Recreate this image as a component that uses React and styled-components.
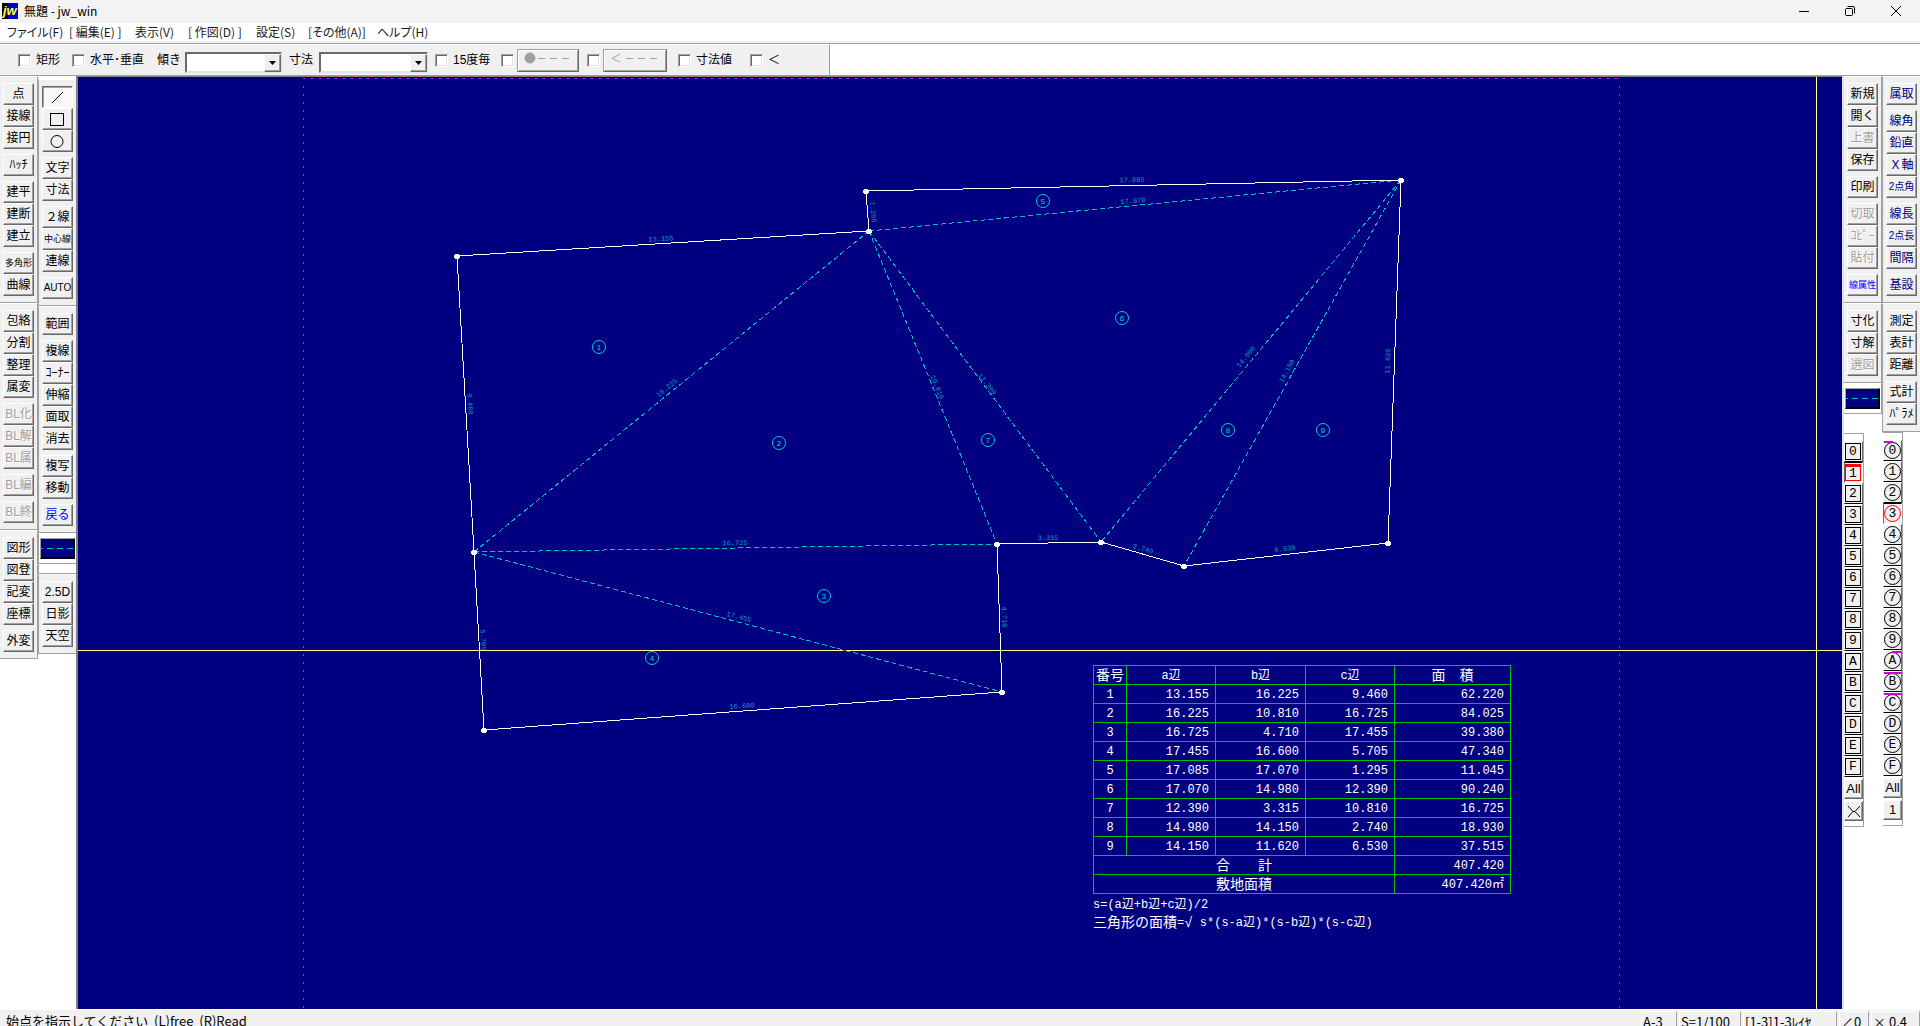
import React, {useState} from 'react';
import styled, {createGlobalStyle, css} from 'styled-components';

const GlobalStyle = createGlobalStyle`
* {
    box-sizing: border-box;
}
body {
    margin: 0;
    background: #fff;
    color: #000;
    font: 12px/16px 'Liberation Sans', 'Noto Sans CJK JP', sans-serif;
}
button, select, input {
    margin: 0;
    padding: 0;
    font: inherit;
    color: inherit;
}
`

const Window = styled.div`
display: grid;
grid-template-rows: 23px 20px 33px 1fr 17px;
height: 100vh;
overflow: hidden;
white-space: nowrap;
`

const TitleBar = styled.header`
display: flex;
align-items: flex-start;
padding: 1px 1px 0 2px;
gap: 6px;
background: #f3f3f3;
font-family: 'Noto Sans CJK JP', sans-serif;
line-height: 20px;

& > svg {
    margin-top: 2px;
}
`
const WindowButtons = styled.div`
display: flex;
margin-left: auto;
`
const WindowButton = styled.button`
display: flex;
align-items: center;
justify-content: center;
width: 46px;
height: 19px;
border: 0;
background: none;
`

const MenuBar = styled.nav`
display: flex;
padding-left: 7px;
border-bottom: 2px solid #f0f0f0;
background: #fff;
font-family: 'Noto Sans CJK JP', sans-serif;
font-size: 12px;
line-height: 18px;
font-feature-settings: 'palt';
`
const MenuLink = styled.a`
width: ${({$width}) => $width}px;
color: #1a1a1a;
text-decoration: none;
`

const ToolBar = styled.div`
border-top: 1px solid #a0a0a0;
border-bottom: 1px solid #a0a0a0;
background: #fff;
`
const ToolPanel = styled.div`
display: flex;
align-items: center;
width: 830px;
height: 31px;
padding-left: 18px;
border-top: 1px solid #fff;
border-right: 1px solid #a0a0a0;
background: #f0f0f0;
`
const Slot = styled.div`
display: flex;
align-items: center;
flex: none;
width: ${({$width}) => $width}px;
`
const CheckLabel = styled.label`
display: flex;
align-items: center;
gap: 5px;
`
const Check = styled.input.attrs({type: 'checkbox'})`
appearance: none;
flex: none;
width: 13px;
height: 13px;
border: 1px solid;
border-color: #a0a0a0 #fff #fff #a0a0a0;
background: #fff;
box-shadow: inset 1px 1px #696969, inset -1px -1px #e3e3e3;

&:checked {
    background: #444;
}
`
const Combo = styled.div`
position: relative;
width: ${({$width}) => $width}px;
height: 21px;
margin-top: 4px;
`
const ComboSelect = styled.select`
appearance: none;
width: 100%;
height: 100%;
padding-left: 4px;
border: 2px solid;
border-color: #696969 #e3e3e3 #e3e3e3 #696969;
border-radius: 0;
background: #fff;
`
const ComboArrow = styled.span`
position: absolute;
top: 2px;
right: 1px;
bottom: 1px;
display: flex;
align-items: center;
justify-content: center;
width: 17px;
border: 1px solid;
border-color: #fff #696969 #696969 #fff;
background: #f0f0f0;
box-shadow: inset -1px -1px #a0a0a0;
pointer-events: none;
`
const StyleButton = styled.button`
width: ${({$width}) => $width}px;
height: 23px;
border: 1px solid;
border-color: #a0a0a0 #696969 #696969 #a0a0a0;
background: #f0f0f0;
box-shadow: inset 1px 1px #fff, inset -1px -1px #a0a0a0;
`

const Workspace = styled.main`
display: grid;
grid-template-columns: auto 1fr auto;
min-height: 0;
`
const Dock = styled.div`
display: flex;
align-items: flex-start;
background: #fff;
`
const Column = styled.div`
display: flex;
flex-direction: column;
width: 38px;
padding-top: ${({$low}) => $low ? 3 : 0}px;
`
const edges = {
    left: css`border-left: 1px solid #a0a0a0;`,
    right: css`border-right: 1px solid #a0a0a0;`,
}
const Panel = styled.div`
display: flex;
flex-direction: column;
gap: 5px;
padding: ${({$flat}) => $flat ? '4px 1px' : '6px 3px'};
border-top: 1px solid #fff;
border-bottom: 1px solid #a0a0a0;
background: ${({$white}) => $white ? '#fff' : '#f0f0f0'};
${({$edge}) => edges[$edge]}
`
const Group = styled.div`
display: flex;
flex-direction: column;
`
const tones = {
    black: '#000',
    blue: '#0000ff',
    navy: '#000080',
    gray: '#a0a0a0',
}
const ToolButton = styled.button`
display: flex;
align-items: center;
justify-content: center;
width: 31px;
height: 22px;
border: 1px solid;
border-color: #fff #696969 #696969 #fff;
background: #f0f0f0;
box-shadow: inset -1px -1px #a0a0a0;
color: ${({$tone}) => tones[$tone]};
font-size: ${({$size}) => $size}px;
line-height: 16px;
text-shadow: ${({$tone}) => $tone === 'gray' ? '1px 1px #fff' : 'none'};
${({$pressed}) => $pressed && css`
    border-color: #696969 #fff #fff #696969;
    background: #f8f8f8;
    box-shadow: inset 1px 1px #a0a0a0;
`}
`
const LineButton = styled.button`
display: block;
width: 35px;
height: 21px;
border: 1px solid;
border-color: #a0a0a0 #000 #000 #a0a0a0;
background: #000080;
box-shadow: inset -1px -1px #000;

& > svg {
    display: block;
}
`

const LayerPanel = styled.div`
display: flex;
flex-direction: column;
width: 20px;
padding: 7px 0 5px;
border: 1px solid #a0a0a0;
border-left: 0;
margin-top: ${({$gap}) => $gap}px;
margin-left: ${({$inset}) => $inset}px;
background: #fff;
`
const LayerButton = styled.button`
position: relative;
display: flex;
align-items: center;
width: 19px;
height: 21px;
border: 1px solid;
border-color: ${({$active}) => $active ? '#000 #fff #fff #696969' : '#fff #696969 #000 #fff'};
background: #f0f0f0;
font-family: 'Liberation Mono', monospace;
font-size: 13px;
`
const LayerMark = styled.span`
display: flex;
align-items: center;
justify-content: center;
width: ${({$round}) => $round ? 17 : 16}px;
height: 17px;
border: 1px solid ${({$active}) => $active ? '#ff0000' : '#000'};
border-top-width: ${({$active, $round}) => $active && !$round ? 3 : 1}px;
border-radius: ${({$round}) => $round ? '50%' : 0};
`
const bars = {
    left: css`left: 0; width: 9px;`,
    right: css`right: 0; width: 9px;`,
    full: css`left: 0; width: 17px;`,
}
const LayerBar = styled.span`
position: absolute;
top: 0;
height: 2px;
background: #d000d0;
${({$bar}) => bars[$bar]}
`
const LayerAction = styled(ToolButton)`
width: 19px;
height: 20px;
margin-top: 2px;
font-size: 13px;
`

const Canvas = styled.section`
position: relative;
overflow: hidden;
border: solid #808080;
border-width: 1px 0 0 2px;
background: #000080;
box-shadow: 2px 0 #e3e3e3;
margin-right: 2px;
`
const Drawing = styled.svg`
position: absolute;
inset: 0;
width: 100%;
height: 100%;
shape-rendering: crispEdges;
`
const Outline = styled.polygon`
fill: none;
stroke: #fff;
`
const Diagonal = styled.line`
stroke: #00c0c0;
stroke-dasharray: 5 3;
`
const PaperEdge = styled.line`
stroke: #ff00ff;
stroke-dasharray: 2 6;
`
const Cursor = styled.line`
stroke: #ffff80;
`
const EdgeLabel = styled.text`
fill: #00a0b8;
font: 7px 'Liberation Mono', monospace;
text-anchor: middle;
dominant-baseline: central;
`
const AreaMark = styled.g`
fill: none;
stroke: #00d0d0;
shape-rendering: geometricPrecision;

& > text {
    fill: #00d0d0;
    stroke: none;
    font: 8px 'Liberation Mono', monospace;
    text-anchor: middle;
}
`

const Report = styled.div`
position: absolute;
left: 1015px;
top: 588px;
color: #fff;
font: 12px/18px 'Liberation Mono', 'Noto Sans CJK JP', monospace;
`
const AreaTable = styled.table`
width: 418px;
height: 227px;
table-layout: fixed;
border-collapse: collapse;
margin-bottom: 2px;

& th, & td {
    padding: 2px 0 0;
    border: 1px solid #00c000;
    font-weight: inherit;
    line-height: 16px;
    text-align: center;
}
`
const NumberCell = styled.td`
&& {
    padding-right: 6px;
    text-align: right;
}
`
const Wide = styled.span`
font-size: 14px;
vertical-align: top;
`
const Formula = styled.p`
margin: 0;
white-space: pre;
`

const StatusBar = styled.footer`
display: flex;
justify-content: space-between;
overflow: hidden;
border-top: 1px solid #fff;
background: #f0f0f0;
font-family: 'Noto Sans CJK JP', sans-serif;
font-size: 13px;
line-height: 20px;
`
const StatusText = styled.span`
padding: 1px 0 0 6px;
white-space: pre;
`
const StatusCells = styled.div`
display: flex;
gap: 2px;
padding-top: 1px;
`
const StatusCell = styled.span`
width: ${({$width}) => $width}px;
height: 24px;
padding-left: 1px;
border: 1px solid;
border-color: #fff #a0a0a0 #fff #fff;
`

const MENUS = [
    ['ファイル(F)', 62],
    ['[ 編集(E) ]', 66],
    ['表示(V)', 53],
    ['[ 作図(D) ]', 68],
    ['設定(S)', 52],
    ['[その他(A)]', 69],
    ['ヘルプ(H)', 60],
];

const SMALL = ['中心線', '多角形', '線属性'];
const MEDIUM = ['AUTO', '2点角', '2点長'];
const DISABLED = ['BL化', 'BL解', 'BL属', 'BL編', 'BL終', '上書', '切取', 'ｺﾋﾟｰ', '貼付', '選図'];
const BLUE = ['戻る', '線属性'];

const LEFT_OUTER = [
    [['点', '接線', '接円'], ['ﾊｯﾁ'], ['建平', '建断', '建立'], ['多角形', '曲線']],
    [['包絡', '分割', '整理', '属変'], ['BL化', 'BL解', 'BL属'], ['BL編'], ['BL終']],
    [['図形', '図登', '記変', '座標'], ['外変']],
];
const LEFT_INNER = [
    [['line', 'rect', 'circle'], ['文字', '寸法'], ['２線', '中心線', '連線'], ['AUTO']],
    [['範囲'], ['複線', 'ｺｰﾅｰ', '伸縮', '面取', '消去'], ['複写', '移動'], ['戻る']],
];
const RIGHT_INNER = [
    [['新規', '開く', '上書', '保存'], ['印刷'], ['切取', 'ｺﾋﾟｰ', '貼付'], ['線属性']],
    [['寸化', '寸解', '選図']],
];
const RIGHT_NAVY = [['属取'], ['線角', '鉛直', 'Ｘ軸', '2点角'], ['線長', '2点長', '間隔'], ['基設']];

const LAYERS = '0123456789ABCDEF'.split('');
const LAYER_BARS = {0: 'left', A: 'right', B: 'full', C: 'full'};

const P = {
    a: [379, 179], b: [791, 154], c: [788, 114], d: [1323, 103],
    e: [1310, 466], f: [1106, 489], g: [1023, 465], h: [919, 467],
    i: [924, 615], j: [406, 653], k: [396, 475],
};
const DIAGONALS = ['bk', 'bh', 'bg', 'bd', 'dg', 'df', 'kh', 'ki'];
const AREA_MARKS = [
    [521, 270], [701, 366], [746, 519], [574, 581], [965, 124],
    [1044, 241], [910, 363], [1150, 353], [1245, 353],
];
const EDGE_LABELS = [
    ['13.155', 583, 162, -4], ['16.225', 589, 311, -39], ['9.460', 392, 327, 86],
    ['1.295', 795, 135, 86], ['17.085', 1054, 103, -1], ['17.070', 1055, 124, -5],
    ['10.810', 859, 310, 68], ['12.390', 909, 307, 53], ['14.980', 1168, 280, -50],
    ['14.150', 1209, 294, -61], ['11.620', 1310, 284, -88], ['3.315', 970, 461, -1],
    ['2.740', 1065, 472, 16], ['6.530', 1207, 472, -7], ['16.725', 657, 466, -1],
    ['17.455', 661, 540, 15], ['4.710', 926, 540, 88], ['16.600', 664, 629, -4],
    ['5.705', 405, 563, 87],
];
const ROWS = [
    ['13.155', '16.225', '9.460', '62.220'],
    ['16.225', '10.810', '16.725', '84.025'],
    ['16.725', '4.710', '17.455', '39.380'],
    ['17.455', '16.600', '5.705', '47.340'],
    ['17.085', '17.070', '1.295', '11.045'],
    ['17.070', '14.980', '12.390', '90.240'],
    ['12.390', '3.315', '10.810', '16.725'],
    ['14.980', '14.150', '2.740', '18.930'],
    ['14.150', '11.620', '6.530', '37.515'],
];

const shapes = {
    line: <path d="M3 14L14 3" />,
    rect: <rect x="1.5" y="2.5" width="13" height="12" />,
    circle: <circle cx="8" cy="8.5" r="6" />,
};

const Tool = ({name, tone, pressed, onClick}) => {
    const color = tone || (DISABLED.includes(name) ? 'gray' : BLUE.includes(name) ? 'blue' : 'black');
    const size = SMALL.includes(name) ? 9 : MEDIUM.includes(name) ? 10 : 12;

    return (
        <ToolButton
            $tone={color}
            $size={size}
            $pressed={pressed}
            onClick={onClick}
            disabled={color === 'gray'}
            aria-label={name}
        >
            {shapes[name]
                ? <svg width="18" height="17" fill="none" stroke="#000">{shapes[name]}</svg>
                : name}
        </ToolButton>
    );
};

const ToolPanels = ({panels, edge, tone, active, onSelect}) => panels.map((groups, i) => (
    <Panel key={i} $edge={edge}>
        {groups.map(group => (
            <Group key={group[0]}>
                {group.map(name => (
                    <Tool
                        key={name}
                        name={name}
                        tone={tone}
                        pressed={active === name}
                        onClick={() => onSelect && onSelect(name)}
                    />
                ))}
            </Group>
        ))}
    </Panel>
));

const LineStyle = ({edge}) => (
    <Panel $flat $white $edge={edge}>
        <LineButton aria-label="線属性">
            <svg width="32" height="18">
                <path d="M0 8.5H32" stroke="#00c0c0" strokeDasharray="6 4" strokeDashoffset="4" />
            </svg>
        </LineButton>
    </Panel>
);

const Layers = ({round, initial, gap, inset, children}) => {
    const [active, setActive] = useState(initial);

    return (
        <LayerPanel $gap={gap} $inset={inset}>
            {LAYERS.map(layer => (
                <LayerButton key={layer} $active={active === layer} onClick={() => setActive(layer)}>
                    <LayerMark $round={round} $active={active === layer}>{layer}</LayerMark>
                    {round && LAYER_BARS[layer] && <LayerBar $bar={LAYER_BARS[layer]} />}
                </LayerButton>
            ))}
            <LayerAction $tone="black">All</LayerAction>
            {children}
        </LayerPanel>
    );
};

const Option = ({width, children, label}) => (
    <Slot $width={width}>
        <CheckLabel>
            <Check aria-label={label} />
            {children}
        </CheckLabel>
    </Slot>
);

const ComboBox = ({id, width}) => (
    <Combo $width={width}>
        <ComboSelect id={id}>
            <option></option>
        </ComboSelect>
        <ComboArrow>
            <svg width="7" height="4"><path d="M0 0H7L3.5 4Z" /></svg>
        </ComboArrow>
    </Combo>
);

const Plan = () => (
    <Drawing>
        <PaperEdge x1="225" y1="1.5" x2="1541" y2="1.5" />
        <PaperEdge x1="225.5" y1="9" x2="225.5" y2="100%" />
        <PaperEdge x1="1541.5" y1="9" x2="1541.5" y2="100%" />
        {DIAGONALS.map(([from, to]) => (
            <Diagonal key={from + to} x1={P[from][0]} y1={P[from][1]} x2={P[to][0]} y2={P[to][1]} />
        ))}
        <Cursor x1="0" y1="573.5" x2="100%" y2="573.5" />
        <Cursor x1="1738.5" y1="0" x2="1738.5" y2="100%" />
        <path d="M765 573.5H768" stroke="#ff0040" />
        <Outline points={Object.values(P).reverse().join(' ')} />
        {Object.values(P).map(([x, y]) => (
            <circle key={`${x}-${y}`} cx={x} cy={y + 0.5} r="3" fill="#fff" />
        ))}
        {EDGE_LABELS.map(([text, x, y, angle]) => (
            <EdgeLabel key={text} transform={`translate(${x} ${y}) rotate(${angle})`}>{text}</EdgeLabel>
        ))}
        {AREA_MARKS.map(([x, y], i) => (
            <AreaMark key={i}>
                <circle cx={x} cy={y} r="6.5" />
                <text x={x} y={y + 3}>{i + 1}</text>
            </AreaMark>
        ))}
    </Drawing>
);

const AreaReport = () => (
    <Report>
        <AreaTable>
            <colgroup>
                <col width="33" />
                <col width="89" />
                <col width="90" />
                <col width="89" />
                <col width="116" />
            </colgroup>
            <thead>
                <tr>
                    <th><Wide>番号</Wide></th>
                    <th>a辺</th>
                    <th>b辺</th>
                    <th>c辺</th>
                    <th><Wide>面　積</Wide></th>
                </tr>
            </thead>
            <tbody>
                {ROWS.map((row, i) => (
                    <tr key={i}>
                        <td>{i + 1}</td>
                        {row.map((value, j) => <NumberCell key={j}>{value}</NumberCell>)}
                    </tr>
                ))}
                <tr>
                    <th colSpan="4"><Wide>合　　計</Wide></th>
                    <NumberCell>407.420</NumberCell>
                </tr>
                <tr>
                    <th colSpan="4"><Wide>敷地面積</Wide></th>
                    <NumberCell>407.420㎡</NumberCell>
                </tr>
            </tbody>
        </AreaTable>
        <Formula>s=(a辺+b辺+c辺)/2</Formula>
        <Formula><Wide>三角形の面積</Wide>=<Wide>√</Wide> s*(s-a辺)*(s-b辺)*(s-c辺)</Formula>
    </Report>
);

const App = () => {

    const [tool, setTool] = useState('line');

    return (
        <Window>
            <GlobalStyle />
            <TitleBar>
                <svg width="16" height="16">
                    <rect width="16" height="16" fill="#000" />
                    <rect x="6" width="10" height="16" fill="#0000d0" />
                    <text x="1" y="12" fill="#ffff40" fontFamily="Liberation Sans" fontSize="13" fontWeight="bold" fontStyle="italic">jw</text>
                </svg>
                <span>無題 - jw_win</span>
                <WindowButtons>
                    <WindowButton aria-label="最小化">
                        <svg width="10" height="10"><path d="M0 5.5H10" stroke="#000" /></svg>
                    </WindowButton>
                    <WindowButton aria-label="元に戻す">
                        <svg width="10" height="10" fill="none" stroke="#000">
                            <rect x="0.5" y="2.5" width="7" height="7" rx="1" />
                            <path d="M2.5 0.5H8Q9.5 0.5 9.5 2V7.5" />
                        </svg>
                    </WindowButton>
                    <WindowButton aria-label="閉じる">
                        <svg width="10" height="10"><path d="M0 0L10 10M10 0L0 10" stroke="#000" /></svg>
                    </WindowButton>
                </WindowButtons>
            </TitleBar>
            <MenuBar>
                {MENUS.map(([title, width]) => (
                    <MenuLink key={title} href="#" $width={width}>{title}</MenuLink>
                ))}
            </MenuBar>
            <ToolBar>
                <ToolPanel>
                    <Option width={54}>矩形</Option>
                    <Option width={85}>水平･垂直</Option>
                    <Slot $width={28}><label htmlFor="angle">傾き</label></Slot>
                    <Slot $width={104}><ComboBox id="angle" width={97} /></Slot>
                    <Slot $width={30}><label htmlFor="size">寸法</label></Slot>
                    <Slot $width={116}><ComboBox id="size" width={109} /></Slot>
                    <Option width={66}>15度毎</Option>
                    <Option width={16} label="点付" />
                    <Slot $width={70}>
                        <StyleButton $width={62} aria-label="●---">
                            <svg width="48" height="14" stroke="#a0a0a0">
                                <circle cx="6" cy="7" r="5" fill="#a0a0a0" />
                                <path d="M14 7.5H48" strokeDasharray="7 5" />
                            </svg>
                        </StyleButton>
                    </Slot>
                    <Option width={16} label="矢印付" />
                    <Slot $width={75}>
                        <StyleButton $width={64} aria-label="<---">
                            <svg width="48" height="14" fill="none" stroke="#a0a0a0">
                                <path d="M9 3L1 7.5L9 11" />
                                <path d="M15 7.5H48" strokeDasharray="7 5" />
                            </svg>
                        </StyleButton>
                    </Slot>
                    <Option width={72}>寸法値</Option>
                    <Option width={40}>＜</Option>
                </ToolPanel>
            </ToolBar>
            <Workspace>
                <Dock>
                    <Column>
                        <ToolPanels panels={LEFT_OUTER} edge="right" active={tool} onSelect={setTool} />
                    </Column>
                    <Column $low>
                        <ToolPanels panels={LEFT_INNER} edge="left" active={tool} onSelect={setTool} />
                        <LineStyle edge="left" />
                        <Panel $flat $white $edge="left" />
                        <ToolPanels panels={[[['2.5D', '日影', '天空']]]} edge="left" active={tool} onSelect={setTool} />
                    </Column>
                </Dock>
                <Canvas>
                    <Plan />
                    <AreaReport />
                </Canvas>
                <Dock>
                    <Column>
                        <ToolPanels panels={RIGHT_INNER} edge="right" />
                        <LineStyle edge="right" />
                        <Layers initial="1" gap={19} inset={0}>
                            <LayerAction $tone="black" aria-label="全レイヤ">
                                <svg width="14" height="13" fill="none" stroke="#000">
                                    <path d="M1 1L6 6.5L1 12M13 1L8 6.5L13 12M6 6.5H8" />
                                </svg>
                            </LayerAction>
                        </Layers>
                    </Column>
                    <Column>
                        <ToolPanels panels={[RIGHT_NAVY]} edge="left" tone="navy" />
                        <ToolPanels panels={[[['測定', '表計', '距離'], ['式計', 'ﾊﾟﾗﾒ']]]} edge="left" />
                        <Layers round initial="3" gap={0} inset={1}>
                            <LayerAction $tone="black">1</LayerAction>
                        </Layers>
                    </Column>
                </Dock>
            </Workspace>
            <StatusBar>
                <StatusText>始点を指示してください  (L)free  (R)Read</StatusText>
                <StatusCells>
                    <StatusCell $width={36}>A-3</StatusCell>
                    <StatusCell $width={62}>S=1/100</StatusCell>
                    <StatusCell $width={94}>[1-3]1-3ﾚｲﾔ</StatusCell>
                    <StatusCell $width={30}>∠0</StatusCell>
                    <StatusCell $width={49}>× 0.4</StatusCell>
                </StatusCells>
            </StatusBar>
        </Window>
    );
}

export default App;
